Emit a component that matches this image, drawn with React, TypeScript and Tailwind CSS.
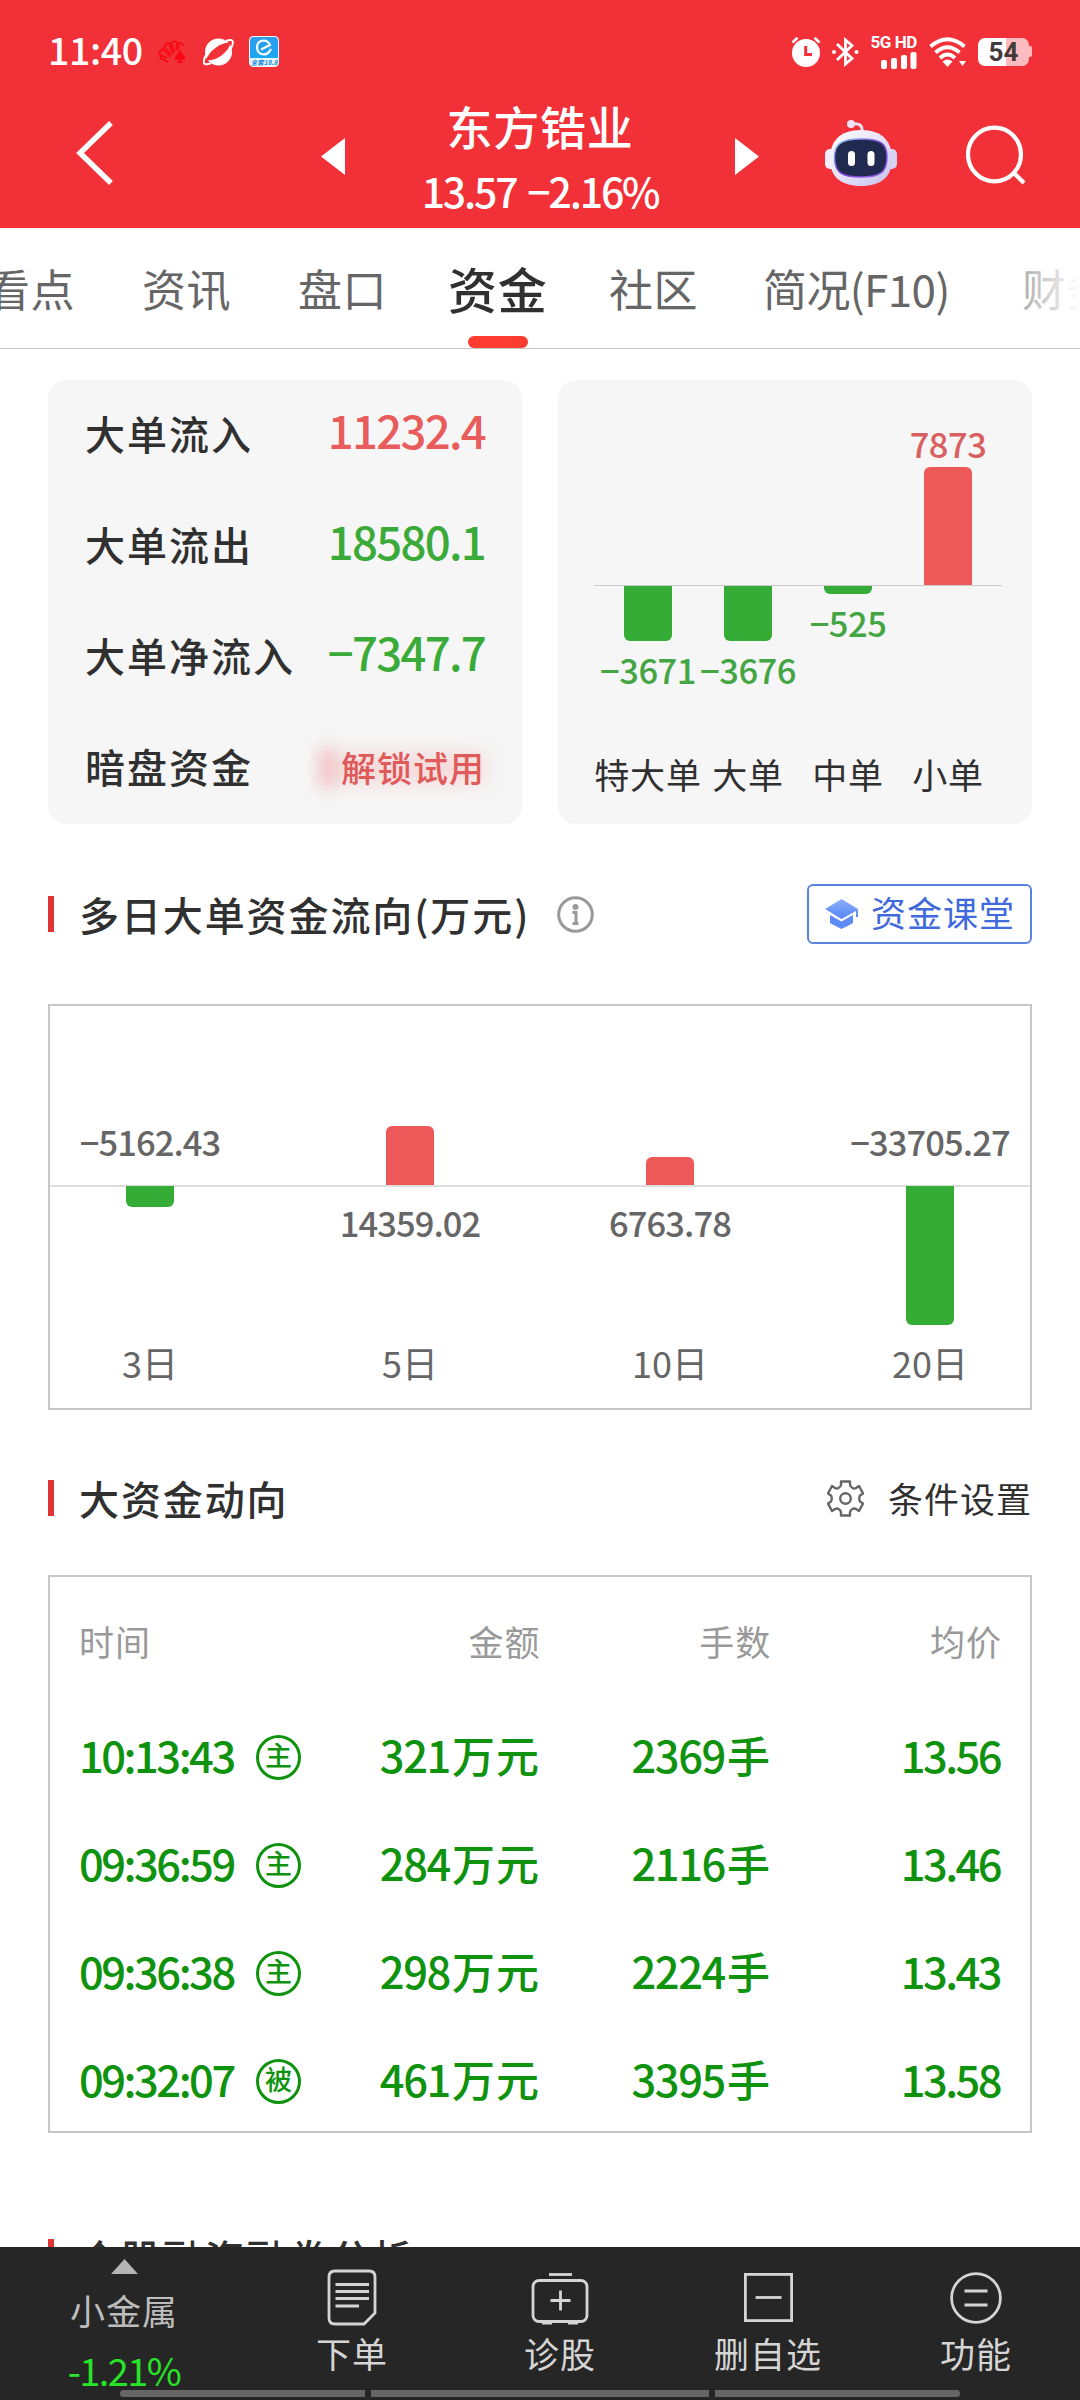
import clsx from 'clsx';

const tabs = [
  { id: 'view', label: '看点', box: 'w-[92px]' },
  { id: 'news', label: '资讯', box: 'w-[92px]' },
  { id: 'quote', label: '盘口', box: 'w-[86px]' },
  { id: 'funds', label: '资金', box: 'w-[97px]', active: true },
  { id: 'community', label: '社区', box: 'w-[90px]' },
  { id: 'profile', label: '简况(F10)', box: 'w-[195px]' },
  { id: 'finance', label: '财务', box: 'w-[90px]' },
];

const flows = [
  { id: 'in', label: '大单流入', value: '11232.4', color: 'text-[#e95c5c]' },
  { id: 'out', label: '大单流出', value: '18580.1', color: 'text-[#3aaa38]' },
  { id: 'net', label: '大单净流入', value: '−7347.7', color: 'text-[#3aaa38]' },
];

const orders = [
  { id: 'xl', label: '特大单', value: -3671 },
  { id: 'l', label: '大单', value: -3676 },
  { id: 'm', label: '中单', value: -525 },
  { id: 's', label: '小单', value: 7873 },
];

const days = [
  { id: 3, label: '3日', value: -5162.43 },
  { id: 5, label: '5日', value: 14359.02 },
  { id: 10, label: '10日', value: 6763.78 },
  { id: 20, label: '20日', value: -33705.27 },
];

const trades = [
  { time: '10:13:43', kind: '主', amount: '321', hands: '2369', price: '13.56' },
  { time: '09:36:59', kind: '主', amount: '284', hands: '2116', price: '13.46' },
  { time: '09:36:38', kind: '主', amount: '298', hands: '2224', price: '13.43' },
  { time: '09:32:07', kind: '被', amount: '461', hands: '3395', price: '13.58' },
];

const format = (n: number) => (n < 0 ? `−${Math.abs(n)}` : `${n}`);

function StatusBar() {
  return (
    <div className="flex h-[103px] items-center pl-[48px] pr-[48px] text-white">
      <span className="-mt-[5px] w-[94px] text-[37.5px] font-medium leading-none tracking-[-0.4px]">11:40</span>
      <svg className="ml-[16px] h-[24px] w-[30px]" viewBox="0 0 30 24" fill="none" stroke="#fb0510" strokeWidth="1.500">
        <path d="M10 22 L2 18 L3 16 M9 18 L1 14 Q2 10 5 9 L12 17 M13 15 L6 7 Q8 3 11 3 L15 14 M16 12 L13 3 Q16 0 19 2 L18 11 M20 10 L21 3 Q25 3 26 6" />
        <path d="M22 9 Q23 13 27 17 Q28 21 23 19.500 L25 23 H19 L21 19.500 Q16 21 17 17 Q21 13 22 9Z" fill="#fb0510" stroke="none" />
      </svg>
      <svg className="ml-[15px] h-[28px] w-[31px]" viewBox="0 0 31 28">
        <circle cx="15.500" cy="14" r="13.500" fill="#fff" />
        <path d="M3.500 22 Q5 15 13 9.500 Q21 4 27 5 Q27 11 18.500 17.500 Q10 23.500 3.500 22Z" fill="#f13037" />
        <path d="M3 17 Q-1 25 2 26 Q4 27 8 25 M23 3 Q28 1 29.500 3 Q31 5 27 12" fill="none" stroke="#fff" strokeWidth="2" />
      </svg>
      <svg className="ml-[15px] h-[31px] w-[30px]" viewBox="0 0 30 31">
        <defs>
          <linearGradient id="app" x1="0" y1="0" x2="0" y2="1">
            <stop offset="0" stopColor="#2f9be8" />
            <stop offset="1" stopColor="#18a9f5" />
          </linearGradient>
        </defs>
        <rect width="30" height="31" rx="4.500" fill="#e9f6fe" />
        <path d="M1 5 Q1 1 5 1 H25 Q29 1 29 5 V22 H1Z" fill="url(#app)" />
        <path d="M12 13.500 L21 9 Q19 4.500 14.500 4.500 Q8 5 8 11.500 Q8.500 18 14.500 18.500 Q18 18.500 20 16 L22 13" fill="none" stroke="#fff" strokeWidth="2.200" />
        <text x="15" y="29" textAnchor="middle" fontSize="6.500" fontWeight="700" fontStyle="italic" fill="#1688d8">全套18.8</text>
      </svg>

      <div className="ml-auto flex items-center">
        <svg className="h-[31px] w-[30px]" viewBox="0 0 30 31">
          <circle cx="15" cy="17" r="14" fill="#fff" />
          <path d="M1.500 6.500 L6.500 1.800 M28.500 6.500 L23.500 1.800" stroke="#fff" strokeWidth="2.600" />
          <path d="M14.700 10 V18.500 H21" fill="none" stroke="#f13037" strokeWidth="3" />
        </svg>
        <svg className="ml-[11px] h-[30px] w-[27px]" viewBox="0 0 27 30" fill="none" stroke="#fff" strokeWidth="2.800">
          <path d="M5 7 L20 21.500 L13.500 27 V3 L20 8.500 L5 23" />
          <circle cx="2" cy="15" r="2" fill="#fff" stroke="none" />
          <circle cx="24.500" cy="15" r="2" fill="#fff" stroke="none" />
        </svg>
        <div className="ml-[9px] flex h-[34px] w-[49px] flex-col items-end">
          <span className="font-[family-name:Roboto,sans-serif] text-[17px] font-bold leading-[14px] tracking-[-0.4px] whitespace-nowrap">5G HD</span>
          <svg className="mt-[3px] h-[17px] w-[36px]" viewBox="0 0 36 17" fill="#fff">
            <rect x="0" y="8" width="6" height="9" rx="2" />
            <rect x="10" y="6" width="6" height="11" rx="2" />
            <rect x="20" y="3" width="6" height="14" rx="2" />
            <rect x="29.500" y="0" width="6" height="17" rx="2" />
          </svg>
        </div>
        <svg className="ml-[12px] h-[30px] w-[37px]" viewBox="0 0 37 30" fill="none" stroke="#fff" strokeWidth="3.800">
          <path d="M1.500 9.500 Q18.500 -5 35.500 9.500" />
          <path d="M6.500 15.500 Q18.500 5 30.500 15.500" />
          <path d="M11 21 Q18.500 14 26 21" />
          <path d="M13.500 24.500 Q18.500 20.500 23.500 24.500 L18.500 30Z" fill="#fff" stroke="none" />
          <path d="M30 24 H37 L33.500 29Z" fill="#fff" stroke="none" />
        </svg>
        <div className="ml-[12px] flex items-center">
          <div className="flex h-[28px] w-[51px] items-center justify-center rounded-[7px] bg-linear-to-r from-white from-[54%] to-[#fcbcbf] to-[54%]">
            <span className="font-[family-name:Roboto,sans-serif] text-[26px] font-bold leading-none text-[#44393b]">54</span>
          </div>
          <div className="h-[11px] w-[3px] rounded-r-[2px] bg-[#fcbcbf]" />
        </div>
      </div>
    </div>
  );
}

function Robot() {
  return (
    <svg className="mt-[16px] ml-[66px] h-[68px] w-[72px]" viewBox="0 0 72 68">
      <defs>
        <linearGradient id="shell" x1="0" y1="0" x2="1" y2="1">
          <stop offset="0" stopColor="#ffffff" />
          <stop offset="0.5" stopColor="#e6e2f8" />
          <stop offset="1" stopColor="#c5c0ec" />
        </linearGradient>
        <linearGradient id="rim" x1="0" y1="0" x2="1" y2="1">
          <stop offset="0" stopColor="#8fd6f5" />
          <stop offset="0.5" stopColor="#7a3fd8" />
          <stop offset="1" stopColor="#9a6bea" />
        </linearGradient>
      </defs>
      <path d="M27 5 Q38 3 37 13" fill="none" stroke="#e8dff5" strokeWidth="3" />
      <circle cx="26" cy="5" r="4" fill="#f0e4f6" />
      <rect x="0" y="30" width="12" height="20" rx="5" fill="#f2effc" />
      <rect x="60" y="30" width="12" height="20" rx="5" fill="#d8d3f3" />
      <path d="M36 11 C58 11 67 23 67 40 C67 58 56 67 36 67 C16 67 5 58 5 40 C5 23 14 11 36 11Z" fill="url(#shell)" />
      <path d="M36 20 C56 20 62 25 62 38 C62 53 56 58 36 58 C16 58 9.500 53 9.500 38 C9.500 25 16 20 36 20Z" fill="#202a50" stroke="url(#rim)" strokeWidth="1.500" />
      <rect x="23" y="32" width="7" height="15" rx="3.500" fill="#fff" />
      <rect x="42.500" y="32" width="7" height="15" rx="3.500" fill="#fff" />
    </svg>
  );
}

function Header() {
  return (
    <header className="h-[228px] shrink-0 bg-[#f13037] text-white">
      <StatusBar />
      <div className="flex h-[125px] items-start pl-[76px]">
        <svg className="mt-[17px] h-[66px] w-[38px]" viewBox="0 0 38 66" fill="none" stroke="#fff" strokeWidth="5.400">
          <path d="M35 3 L4 33 L35 63" />
        </svg>
        <svg className="mt-[35px] ml-[207px] h-[37px] w-[24px]" viewBox="0 0 24 37">
          <path d="M0 18.500 L24 0 V37Z" fill="#fff" />
        </svg>
        <div className="flex w-[390px] flex-col items-center">
          <h1 className="-mt-[2px] text-[46px] font-medium leading-[48px] tracking-[0.8px]">东方锆业</h1>
          <p className="mt-[17px] text-[41px] font-medium leading-[48px] tracking-[-2.2px] [word-spacing:4px] whitespace-nowrap">13.57 −2.16%</p>
        </div>
        <svg className="mt-[35px] h-[37px] w-[24px]" viewBox="0 0 24 37">
          <path d="M24 18.500 L0 0 V37Z" fill="#fff" />
        </svg>
        <Robot />
        <svg className="mt-[22px] ml-[69px] h-[60px] w-[62px]" viewBox="0 0 62 60" fill="none" stroke="#fff" strokeWidth="4.200">
          <ellipse cx="28.500" cy="29.500" rx="26.500" ry="26.800" />
          <path d="M47.500 47.500 L58 58" />
        </svg>
      </div>
    </header>
  );
}

function Tabs() {
  return (
    <nav className="relative flex h-[121px] shrink-0 overflow-hidden border-b border-[#c8c8c8]">
      <div className="-ml-[14px] flex gap-[64px]">
        {tabs.map((tab) => (
          <div key={tab.id} className={clsx('flex shrink-0 flex-col', tab.box)}>
            <span
              className={clsx(
                'leading-[120px] whitespace-nowrap',
                tab.active ? 'text-[49px] font-medium tracking-[0.8px] text-[#303030]' : 'text-[44px] text-[#666]',
                !tab.active && (tab.id === 'profile' ? 'tracking-[-0.6px]' : 'tracking-[0.5px]'),
              )}
            >
              {tab.label}
            </span>
            {tab.active && <span className="-mt-[12px] ml-[20px] h-[12px] w-[60px] shrink-0 rounded-[6px] bg-[#fc3b31]" />}
          </div>
        ))}
      </div>
      <div className="absolute inset-y-0 right-0 w-[76px] bg-linear-to-r from-white/30 to-white" />
    </nav>
  );
}

function FlowCard() {
  return (
    <div className="h-[444px] w-[474px] rounded-[18px] bg-[#f6f6f6] pr-[37px] pl-[37px]">
      {flows.map((flow) => (
        <div key={flow.id} className="flex h-[111px] items-center justify-between">
          <span className="-mt-[6px] text-[40px] font-medium leading-none tracking-[2px] whitespace-nowrap text-[#303030]">{flow.label}</span>
          <span className={clsx('mt-[-11px] text-[45.5px] font-medium leading-none tracking-[-1.7px] whitespace-nowrap', flow.color)}>{flow.value}</span>
        </div>
      ))}
      <div className="flex h-[111px] items-center justify-between">
        <span className="-mt-[6px] text-[40px] font-medium leading-none tracking-[2px] text-[#303030]">暗盘资金</span>
        <span className="relative -mt-px">
          <span className="absolute -inset-y-[2px] -left-[22px] w-[14px] bg-[#f06a6a]/30 blur-[8px]" />
          <span className="absolute inset-y-[4px] right-0 -left-[16px] bg-[#f06a6a]/20 blur-[10px]" />
          <span className="relative text-[35px] font-medium leading-none tracking-[1px] text-[#e05a5a]">解锁试用</span>
        </span>
      </div>
    </div>
  );
}

function OrderCard() {
  const scale = 0.015;
  return (
    <div className="h-[444px] w-[474px] rounded-[18px] bg-[#f6f6f6] px-[36px]">
      <div className="flex h-[205px] items-end pl-[4px]">
        {orders.map((order) => (
          <div key={order.id} className="flex w-[100px] shrink-0 flex-col items-center">
            {order.value > 0 && (
              <>
                <span className="mb-[5px] text-[34.5px] font-medium leading-[38px] tracking-[-0.5px] text-[#d96060]">{format(order.value)}</span>
                <div className="w-[48px] rounded-t-[6px] bg-[#ed5858]" style={{ height: order.value * scale }} />
              </>
            )}
          </div>
        ))}
      </div>
      <div className="-mr-[6px] h-px bg-[#cbcbcb]" />
      <div className="flex h-[168px] items-start pl-[4px]">
        {orders.map((order) => (
          <div key={order.id} className="flex w-[100px] shrink-0 flex-col items-center">
            {order.value < 0 && (
              <>
                <div className="w-[48px] rounded-b-[6px] bg-[#35ac35]" style={{ height: -order.value * scale }} />
                <span className="mt-[9px] text-[34.5px] font-medium leading-[38px] tracking-[-0.5px] whitespace-nowrap text-[#43a543]">{format(order.value)}</span>
              </>
            )}
          </div>
        ))}
      </div>
      <div className="flex pl-[4px]">
        {orders.map((order) => (
          <span key={order.id} className="flex w-[100px] shrink-0 justify-center text-[35px] leading-[40px] tracking-[0.8px] whitespace-nowrap text-[#303030]">
            {order.label}
          </span>
        ))}
      </div>
    </div>
  );
}

function SectionTitle({ children }: { children: string }) {
  return (
    <div className="flex h-[36px] items-center">
      <span className="h-[36px] w-[6px] bg-[#e03535]" />
      <h2 className="-mt-px ml-[25px] text-[40px] font-medium leading-none tracking-[1.9px] whitespace-nowrap text-[#303030]">{children}</h2>
    </div>
  );
}

function DaysChart() {
  const scale = 0.004112;
  return (
    <div className="mt-[60px] h-[406px] border-2 border-[#c6c6c6]">
      <div className="-mx-[2px] flex h-[179px] items-end justify-between">
        {days.map((day) => (
          <div key={day.id} className="flex w-[204px] flex-col items-center">
            {day.value > 0 ? (
              <div className="w-[48px] rounded-t-[6px] bg-[#ed5858]" style={{ height: day.value * scale }} />
            ) : (
              <span className="mb-[24px] text-[34.5px] font-medium leading-[40px] tracking-[-0.9px] whitespace-nowrap text-[#666]">{format(day.value)}</span>
            )}
          </div>
        ))}
      </div>
      <div className="h-[2px] bg-[#dedede]" />
      <div className="-mx-[2px] -mt-px flex h-[156px] items-start justify-between">
        {days.map((day) => (
          <div key={day.id} className="flex w-[204px] flex-col items-center">
            {day.value < 0 ? (
              <div className="w-[48px] rounded-b-[6px] bg-[#35ac35]" style={{ height: -day.value * scale }} />
            ) : (
              <span className="mt-[16px] text-[34.5px] font-medium leading-[40px] tracking-[-0.9px] whitespace-nowrap text-[#666]">{format(day.value)}</span>
            )}
          </div>
        ))}
      </div>
      <div className="-mx-[2px] flex justify-between">
        {days.map((day) => (
          <span key={day.id} className="w-[204px] text-center text-[36px] leading-[40px] text-[#666]">{day.label}</span>
        ))}
      </div>
    </div>
  );
}

function TradeTable() {
  return (
    <div className="mt-[59px] h-[558px] border-2 border-[#c6c6c6] pr-[28px] pl-[29px]">
      <div className="flex h-[126px] items-center text-[35px] leading-none tracking-[1px] text-[#999]">
        <span className="w-[232px]">时间</span>
        <span className="w-[230px] text-right">金额</span>
        <span className="w-[231px] text-right">手数</span>
        <span className="w-[231px] text-right">均价</span>
      </div>
      {trades.map((trade) => (
        <div key={trade.time} className="flex h-[108px] items-center text-[43.5px] font-medium leading-none tracking-[-1.4px] whitespace-nowrap text-[#0f930f]">
          <span className="-mt-[5px] w-[177px] tracking-[-2.5px]">{trade.time}</span>
          <span className="flex h-[45px] w-[45px] items-center justify-center rounded-full border-[3px] border-[#0f930f]">
            <span className="-mt-[6px] text-[27px] leading-none tracking-normal">{trade.kind}</span>
          </span>
          <span className="-mt-[5px] w-[239px] text-right">
            {trade.amount}
            <span className="ml-[2px] text-[43px] tracking-[1px]">万元</span>
          </span>
          <span className="-mt-[5px] w-[231px] text-right">
            {trade.hands}
            <span className="ml-[2px] text-[43px] tracking-[1px]">手</span>
          </span>
          <span className="-mt-[5px] w-[229px] text-right tracking-[-2.6px]">{trade.price}</span>
        </div>
      ))}
    </div>
  );
}

function BottomNav() {
  return (
    <footer className="h-[153px] shrink-0 bg-[#262626] text-[#d5d5d5]">
      <div className="flex h-[143px] text-[35px] leading-[40px] tracking-[1px]">
        <div className="flex w-[248px] flex-col items-center pt-[12px] text-[#bdbdbd]">
          <svg className="h-[15px] w-[27px]" viewBox="0 0 27 15">
            <path d="M13.500 0 L27 15 H0Z" fill="#b5b5b5" />
          </svg>
          <span className="mt-[16px]">小金属</span>
          <span className="mt-[20px] text-[38px] tracking-[-1.6px] text-[#27e427]">-1.21%</span>
        </div>
        <div className="flex w-[208px] flex-col items-center pt-[22px]">
          <svg className="h-[57px] w-[50px]" viewBox="0 0 50 57" fill="none" stroke="#d5d5d5" strokeWidth="2.800">
            <path d="M8 2 H42 Q48 2 48 8 V44 L37 55 H8 Q2 55 2 49 V8 Q2 2 8 2Z" />
            <path d="M8.500 15.500 H42 M8.500 22.500 H42 M8.500 29.500 H42 M8.500 37 H32" />
          </svg>
          <span className="mt-[7px]">下单</span>
        </div>
        <div className="flex w-[208px] flex-col items-center pt-[25px]">
          <svg className="h-[54px] w-[58px]" viewBox="0 0 58 54" fill="none" stroke="#d5d5d5" strokeWidth="2.800">
            <path d="M18 2.500 H41" />
            <rect x="2" y="8.500" width="54" height="41" rx="6" />
            <path d="M29.500 18.500 V38.500 M19.500 28.500 H39.500 M11 51 H21 M37 51 H47" />
          </svg>
          <span className="mt-[7px]">诊股</span>
        </div>
        <div className="flex w-[208px] flex-col items-center pt-[26px]">
          <svg className="h-[49px] w-[49px]" viewBox="0 0 49 49" fill="none" stroke="#d5d5d5" strokeWidth="2.800">
            <rect x="1.400" y="1.400" width="46.200" height="46.200" />
            <path d="M11.500 24.500 H37.500" />
          </svg>
          <span className="mt-[11px]">删自选</span>
        </div>
        <div className="flex w-[208px] flex-col items-center pt-[25px]">
          <svg className="h-[52px] w-[52px]" viewBox="0 0 52 52" fill="none" stroke="#d5d5d5" strokeWidth="2.800">
            <circle cx="26" cy="26" r="24.400" />
            <path d="M14.500 19 H37.500 M14.500 33 H37.500" />
          </svg>
          <span className="mt-[9px]">功能</span>
        </div>
      </div>
      <div className="flex gap-[6px] pl-[120px]">
        <span className="h-[7px] w-[245px] rounded-l-full bg-[#666]" />
        <span className="h-[7px] w-[338px] bg-[#666]" />
        <span className="h-[7px] w-[245px] rounded-r-full bg-[#666]" />
      </div>
    </footer>
  );
}

export default function App() {
  return (
    <div className="flex h-[2400px] w-[1080px] flex-col overflow-hidden bg-white font-[family-name:'Noto_Sans_CJK_SC',sans-serif]">
      <Header />
      <Tabs />
      <main className="min-h-0 flex-1 overflow-hidden px-[48px] pt-[31px]">
        <div className="flex justify-between">
          <FlowCard />
          <OrderCard />
        </div>

        <div className="mt-[60px] flex h-[60px] items-center">
          <SectionTitle>多日大单资金流向(万元)</SectionTitle>
          <svg className="ml-[27px] h-[37px] w-[37px]" viewBox="0 0 37 37">
            <circle cx="18.500" cy="18.500" r="16.800" fill="none" stroke="#999" strokeWidth="3" />
            <circle cx="18.500" cy="11" r="3" fill="#999" />
            <path d="M15.500 16.500 H19 V27 M15.500 27.500 H21.500" fill="none" stroke="#999" strokeWidth="3" />
          </svg>
          <button className="ml-auto flex h-[60px] w-[225px] items-center rounded-[6px] border-2 border-[#5a82e2] pl-[16px]">
            <svg className="h-[30px] w-[33px]" viewBox="0 0 33 30">
              <defs>
                <linearGradient id="cap" x1="0" y1="0" x2="0" y2="1">
                  <stop offset="0" stopColor="#8fb0fc" />
                  <stop offset="1" stopColor="#5584f5" />
                </linearGradient>
              </defs>
              <path d="M16.500 0 L33 10 V18 H31 V12 L16.500 20 L0 10Z" fill="url(#cap)" />
              <path d="M5 16 L16.500 22.500 L28 16 V24 Q23 27 16.500 30 Q10 27 5 24Z" fill="#5f8bf6" />
            </svg>
            <span className="-mt-[5px] ml-[13px] text-[35px] leading-none tracking-[1px] text-[#3f69dc]">资金课堂</span>
          </button>
        </div>
        <DaysChart />

        <div className="mt-[70px] flex h-[36px] items-center justify-between">
          <SectionTitle>大资金动向</SectionTitle>
          <div className="flex items-center">
            <svg className="h-[37px] w-[37px]" viewBox="0 0 37 37" fill="none" stroke="#666" strokeWidth="2.400" strokeLinejoin="round">
              <path d="M14 1.500 H23 V5 Q23.500 7 25.500 8 Q27 9 29 8 L32 6 L36 13.500 L33 15.500 Q31.500 18.500 33 21.500 L36 23.500 L32 31 L29 29 Q27 28 25.500 29 Q23.500 30 23 32 V35.500 H14 V32 Q13.500 30 11.500 29 Q10 28 8 29 L5 31 L1 23.500 L4 21.500 Q5.500 18.500 4 15.500 L1 13.500 L5 6 L8 8 Q10 9 11.500 8 Q13.500 7 14 5Z" />
              <circle cx="18.500" cy="18.500" r="5.300" />
            </svg>
            <span className="-mt-px ml-[24px] text-[35px] leading-none tracking-[1px] text-[#303030]">条件设置</span>
          </div>
        </div>
        <TradeTable />

        <div className="mt-[106px]">
          <SectionTitle>个股融资融券分析</SectionTitle>
        </div>
      </main>
      <BottomNav />
    </div>
  );
}
